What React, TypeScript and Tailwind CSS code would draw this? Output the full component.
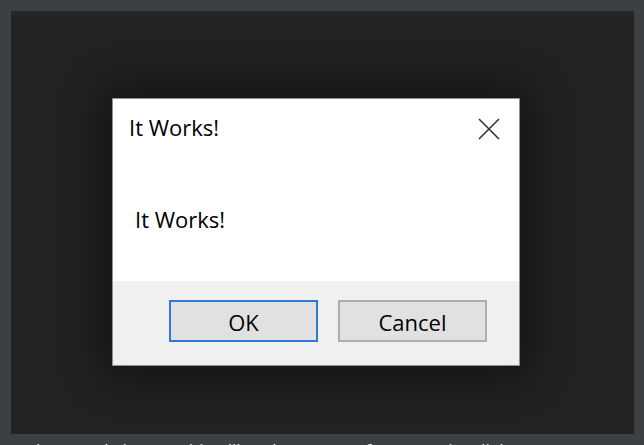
import React from "react";

export default function App() {
  return (
    <div
      className="w-[644px] h-[445px] bg-[#3c4043] overflow-hidden flex flex-col"
      style={{ fontFamily: '"Open Sans", "Noto Sans", sans-serif' }}
    >
      <div className="ml-[11px] mt-[11px] w-[623px] h-[423px] bg-[#222222] flex flex-col shrink-0">
        <div className="h-[5px] bg-[#262626]" />
        <div className="ml-[101px] mt-[82px] w-[408px] h-[268px] bg-white border border-[#8f8f8f] shadow-[0_0_40px_10px_rgba(0,0,0,0.45)] flex flex-col">
          <div className="flex items-start justify-between pl-[16px] pr-[19px] pt-[14px] h-[106px]">
            <span className="text-[22px] leading-[28px] text-black">It Works!</span>
            <svg width="22" height="22" viewBox="0 0 22 22" className="mt-[5px]">
              <path d="M1 1 L21 21 M21 1 L1 21" stroke="#333" strokeWidth="1.6" />
            </svg>
          </div>
          <div className="pl-[22px] h-[76px]">
            <span className="text-[22px] leading-[28px] text-black">It Works!</span>
          </div>
          <div className="flex-1 bg-[#f0f0f0] flex justify-end items-start pt-[19px] pr-[32px] gap-[20px]">
            <button className="w-[149px] h-[42px] bg-[#e1e1e1] border-2 border-[#2f78d8] text-[22px] text-black flex items-center justify-center pt-[2px]">
              OK
            </button>
            <button className="w-[149px] h-[42px] bg-[#e1e1e1] border-2 border-[#adadad] text-[22px] text-black flex items-center justify-center pt-[2px]">
              Cancel
            </button>
          </div>
        </div>
      </div>
      <div className="mt-[4px] pl-[30px] text-[17px] leading-[24px] text-[#e8e8e8] whitespace-nowrap">
        the sample is something like what you get from a native dialog
      </div>
    </div>
  );
}
